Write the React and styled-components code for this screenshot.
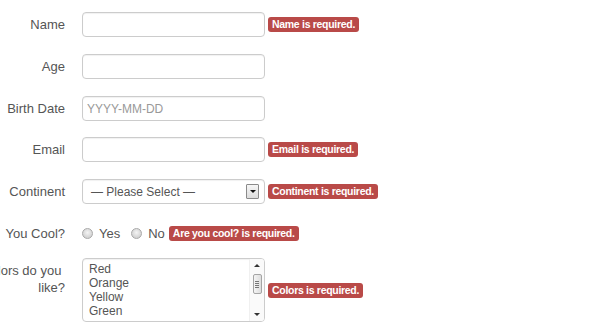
import React from 'react';
import styled, { createGlobalStyle } from 'styled-components';

const GlobalStyle = createGlobalStyle`
  html, body {
    margin: 0;
    padding: 0;
    background: #fff;
    overflow: hidden;
  }
  body {
    font-family: "Liberation Sans", Arial, sans-serif;
    color: #555;
  }
`;

const Form = styled.form`
  display: flex;
  flex-direction: column;
  margin-left: -75px;
  padding-top: 12px;
`;

const Row = styled.div`
  display: grid;
  grid-template-columns: 140px auto;
  column-gap: 17px;
  align-items: ${({ $top }) => ($top ? 'start' : 'center')};
  margin-top: ${({ $space = 0 }) => $space}px;
`;

const Label = styled.label`
  text-align: right;
  font-size: 13px;
  line-height: 17px;
  color: #555;
  padding-top: ${({ $top }) => ($top ? '4px' : '0')};
  white-space: ${({ $top }) => ($top ? 'break-spaces' : 'normal')};
`;

const Controls = styled.div`
  display: flex;
  align-items: center;
  height: ${({ $h }) => ($h ? `${$h}px` : 'auto')};
`;

const TextInput = styled.input`
  box-sizing: border-box;
  width: 183px;
  height: 25px;
  padding: 0 4px;
  border: 1px solid #ccc;
  border-radius: 4px;
  box-shadow: inset 0 1px 1px rgba(0, 0, 0, 0.06);
  font-family: "Liberation Sans", Arial, sans-serif;
  font-size: 12px;
  color: #555;
  outline: none;

  &::placeholder {
    color: #999;
  }
`;

const SelectBox = styled.div`
  position: relative;
  box-sizing: border-box;
  width: 183px;
  height: 25px;
  border: 1px solid #ccc;
  border-radius: 4px;
  box-shadow: inset 0 1px 1px rgba(0, 0, 0, 0.06);
  display: flex;
  align-items: center;
  padding-left: 8px;
  font-size: 12px;
  color: #555;
`;

const DropButton = styled.span`
  position: absolute;
  right: 5px;
  top: 4px;
  box-sizing: border-box;
  width: 13px;
  height: 15px;
  border: 1px solid #8a8a8a;
  border-radius: 1px;
  background: linear-gradient(#f6f6f6, #dcdcdc);
  display: flex;
  align-items: center;
  justify-content: center;

  &::after {
    content: '';
    border-left: 3px solid transparent;
    border-right: 3px solid transparent;
    border-top: 3px solid #111;
  }
`;

const Badge = styled.span`
  display: inline-block;
  margin-left: ${({ $gap = 3 }) => $gap}px;
  height: 15px;
  line-height: 15px;
  padding: 0 4px;
  border-radius: 3px;
  background: #b94a48;
  color: #fff;
  font-weight: bold;
  font-size: 10.5px;
  letter-spacing: -0.3px;
  white-space: nowrap;
`;

const RadioGroup = styled.div`
  display: flex;
  align-items: center;
`;

const RadioDot = styled.span`
  box-sizing: border-box;
  width: 11px;
  height: 11px;
  border-radius: 50%;
  border: 1px solid #a9a9a9;
  background: radial-gradient(circle at 50% 40%, #f4f4f4 0%, #dadada 55%, #c8c8c8 100%);
  margin-right: 6px;
`;

const RadioText = styled.span`
  font-size: 13px;
  color: #555;
  margin-right: ${({ $gap = 0 }) => $gap}px;
`;

const ListBox = styled.div`
  box-sizing: border-box;
  width: 183px;
  height: 64px;
  border: 1px solid #ccc;
  border-radius: 4px;
  box-shadow: inset 0 1px 1px rgba(0, 0, 0, 0.06);
  display: flex;
  overflow: hidden;
`;

const Options = styled.div`
  flex: 1;
  padding: 3px 6px;
  font-size: 12px;
  line-height: 14px;
  color: #555;
`;

const Scrollbar = styled.div`
  width: 14px;
  display: flex;
  flex-direction: column;
  align-items: center;
  background: #fafafa;
  border-left: 1px solid #f0f0f0;
`;

const Arrow = styled.span`
  height: 13px;
  display: flex;
  align-items: center;
  justify-content: center;

  &::after {
    content: '';
    border-left: 3px solid transparent;
    border-right: 3px solid transparent;
    ${({ $up }) => ($up ? 'border-bottom: 3px solid #333;' : 'border-top: 3px solid #333;')}
  }
`;

const Thumb = styled.span`
  box-sizing: border-box;
  width: 9px;
  height: 20px;
  margin-top: 2px;
  border: 1px solid #a5a5a5;
  border-radius: 2px;
  background: linear-gradient(90deg, #f4f4f4, #dedede);
  display: flex;
  flex-direction: column;
  align-items: center;
  justify-content: center;
  gap: 1px;

  & > i {
    display: block;
    width: 4px;
    height: 1px;
    background: #777;
  }
`;

const Track = styled.span`
  flex: 1;
`;

const colors = ['Red', 'Orange', 'Yellow', 'Green'];

export default function App() {
  return (
    <>
      <GlobalStyle />
      <Form>
        <Row>
          <Label>Name</Label>
          <Controls>
            <TextInput type="text" />
            <Badge>Name is required.</Badge>
          </Controls>
        </Row>

        <Row $space={17}>
          <Label>Age</Label>
          <Controls>
            <TextInput type="text" />
          </Controls>
        </Row>

        <Row $space={17}>
          <Label>Birth Date</Label>
          <Controls>
            <TextInput type="text" placeholder="YYYY-MM-DD" />
          </Controls>
        </Row>

        <Row $space={16}>
          <Label>Email</Label>
          <Controls>
            <TextInput type="text" />
            <Badge>Email is required.</Badge>
          </Controls>
        </Row>

        <Row $space={17}>
          <Label>Continent</Label>
          <Controls>
            <SelectBox>
              — Please Select —
              <DropButton />
            </SelectBox>
            <Badge>Continent is required.</Badge>
          </Controls>
        </Row>

        <Row $space={17}>
          <Label>You Cool?</Label>
          <Controls $h={25}>
            <RadioGroup>
              <RadioDot />
              <RadioText $gap={11}>Yes</RadioText>
              <RadioDot />
              <RadioText>No</RadioText>
            </RadioGroup>
            <Badge $gap={4}>Are you cool? is required.</Badge>
          </Controls>
        </Row>

        <Row $space={12} $top>
          <Label $top>What colors do you like?</Label>
          <Controls>
            <ListBox>
              <Options>
                {colors.map((c) => (
                  <div key={c}>{c}</div>
                ))}
              </Options>
              <Scrollbar>
                <Arrow $up />
                <Thumb>
                  <i />
                  <i />
                  <i />
                  <i />
                </Thumb>
                <Track />
                <Arrow />
              </Scrollbar>
            </ListBox>
            <Badge>Colors is required.</Badge>
          </Controls>
        </Row>
      </Form>
    </>
  );
}
